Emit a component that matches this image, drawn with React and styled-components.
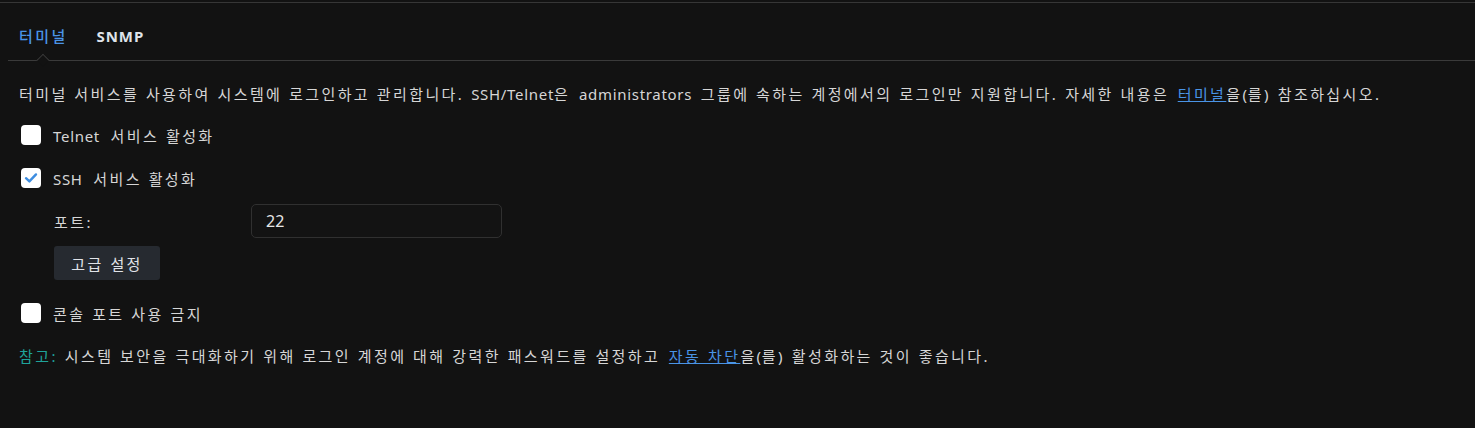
import React from "react";
import styled, { createGlobalStyle } from "styled-components";

const GlobalStyle = createGlobalStyle`
    html, body {
        margin: 0;
        padding: 0;
        background: #121212;
    }
    body {
        font-family: "Noto Sans", "Noto Sans CJK KR", sans-serif;
        color: #d6d6d6;
    }
`;

const Page = styled.div`
    width: 1475px;
    height: 428px;
    background: #121212;
    border-top: 1px solid #363636;
    margin-top: 2px;
    box-sizing: border-box;
`;

const Tabs = styled.div`
    display: flex;
    align-items: center;
    gap: 29px;
    height: 57px;
    margin-left: 8px;
    padding-left: 11px;
    border-bottom: 1px solid #3a3a3a;
`;

const Tab = styled.div`
    position: relative;
    height: 100%;
    display: flex;
    align-items: center;
    padding-top: 8px;
    box-sizing: border-box;
    font-size: 15px;
    letter-spacing: ${props => (props.active ? 0 : 0.9)}px;
    font-weight: ${props => (props.active ? 500 : 700)};
    color: ${props => (props.active ? "#4a94e6" : "#dfe3ea")};
    &::after {
        content: "";
        display: ${props => (props.active ? "block" : "none")};
        position: absolute;
        left: 50%;
        bottom: -1px;
        width: 8px;
        height: 8px;
        background: #121212;
        border-left: 1px solid #3a3a3a;
        border-top: 1px solid #3a3a3a;
        transform: translate(-50%, 50%) rotate(45deg);
        margin-bottom: 1px;
    }
`;

const Hangul = styled.span`
    font-family: "Noto Sans CJK KR", sans-serif;
    letter-spacing: 2.4px;
    word-spacing: 1px;
`;

const Body = styled.div`
    padding: 22px 19px 0;
    display: flex;
    flex-direction: column;
`;

const Text = styled.p`
    margin: 0;
    margin-top: ${props => props.top || 0}px;
    font-size: 15px;
    line-height: 22px;
    letter-spacing: 0.7px;
    word-spacing: 4px;
    color: #d6d6d6;
`;

const Link = styled.a`
    color: #4a94e6;
    text-decoration: underline;
    cursor: pointer;
`;

const Note = styled.span`
    color: #1fa39a;
`;

const CheckRow = styled.label`
    display: flex;
    align-items: center;
    gap: 12px;
    height: 22px;
    margin-top: ${props => props.top}px;
    padding-left: 2px;
    font-size: 15px;
    letter-spacing: 0.7px;
    word-spacing: 6px;
    color: #d6d6d6;
`;

const Box = styled.span`
    width: 20px;
    height: 20px;
    border-radius: 4px;
    background: #ffffff;
    display: flex;
    align-items: center;
    justify-content: center;
    flex-shrink: 0;
`;

const Sub = styled.div`
    padding-left: 35px;
    display: flex;
    flex-direction: column;
`;

const FieldRow = styled.div`
    display: grid;
    grid-template-columns: 197px 251px;
    align-items: center;
    margin-top: 15px;
    font-size: 15px;
`;

const Input = styled.div`
    height: 34px;
    box-sizing: border-box;
    border: 1px solid #303030;
    border-radius: 5px;
    background: #131313;
    padding-left: 14px;
    display: flex;
    align-items: center;
    font-size: 16px;
    color: #e6e6e6;
`;

const Button = styled.div`
    margin-top: 8px;
    width: 106px;
    height: 34px;
    border-radius: 3px;
    background: #262a30;
    color: #e0e3e8;
    font-size: 15px;
    display: flex;
    align-items: center;
    justify-content: center;
`;

// wraps runs of Hangul so they get the wider spacing of the original UI font
const K = ({ children }) =>
    String(children)
        .split(/([\uAC00-\uD7A3]+(?:\s[\uAC00-\uD7A3]+)*)/)
        .map((part, i) =>
            /[\uAC00-\uD7A3]/.test(part) ? <Hangul key={i}>{part}</Hangul> : part
        );

const Check = ({ checked }) => (
    <Box>
        {checked && (
            <svg width="14" height="14" viewBox="0 0 14 14">
                <path d="M2 7.2 L5.4 10.4 L12 3.4" fill="none" stroke="#3d8de0" strokeWidth="2.4" strokeLinecap="round" strokeLinejoin="round" />
            </svg>
        )}
    </Box>
);

export default function App() {
    return (
        <>
            <GlobalStyle />
            <Page>
                <Tabs>
                    <Tab active><K>터미널</K></Tab>
                    <Tab>SNMP</Tab>
                </Tabs>
                <Body>
                    <Text>
                        <K>터미널 서비스를 사용하여 시스템에 로그인하고 관리합니다. SSH/Telnet은 administrators 그룹에 속하는 계정에서의 로그인만 지원합니다. 자세한 내용은 </K>
                        <Link><K>터미널</K></Link>
                        <K>을(를) 참조하십시오.</K>
                    </Text>
                    <CheckRow top={19}>
                        <Check />
                        <span><K>Telnet 서비스 활성화</K></span>
                    </CheckRow>
                    <CheckRow top={21}>
                        <Check checked />
                        <span><K>SSH 서비스 활성화</K></span>
                    </CheckRow>
                    <Sub>
                        <FieldRow>
                            <span><K>포트:</K></span>
                            <Input>22</Input>
                        </FieldRow>
                        <Button><K>고급 설정</K></Button>
                    </Sub>
                    <CheckRow top={22}>
                        <Check />
                        <span><K>콘솔 포트 사용 금지</K></span>
                    </CheckRow>
                    <Text top={21}>
                        <Note><K>참고:</K></Note>
                        {" "}
                        <K>시스템 보안을 극대화하기 위해 로그인 계정에 대해 강력한 패스워드를 설정하고 </K>
                        <Link><K>자동 차단</K></Link>
                        <K>을(를) 활성화하는 것이 좋습니다.</K>
                    </Text>
                </Body>
            </Page>
        </>
    );
}
